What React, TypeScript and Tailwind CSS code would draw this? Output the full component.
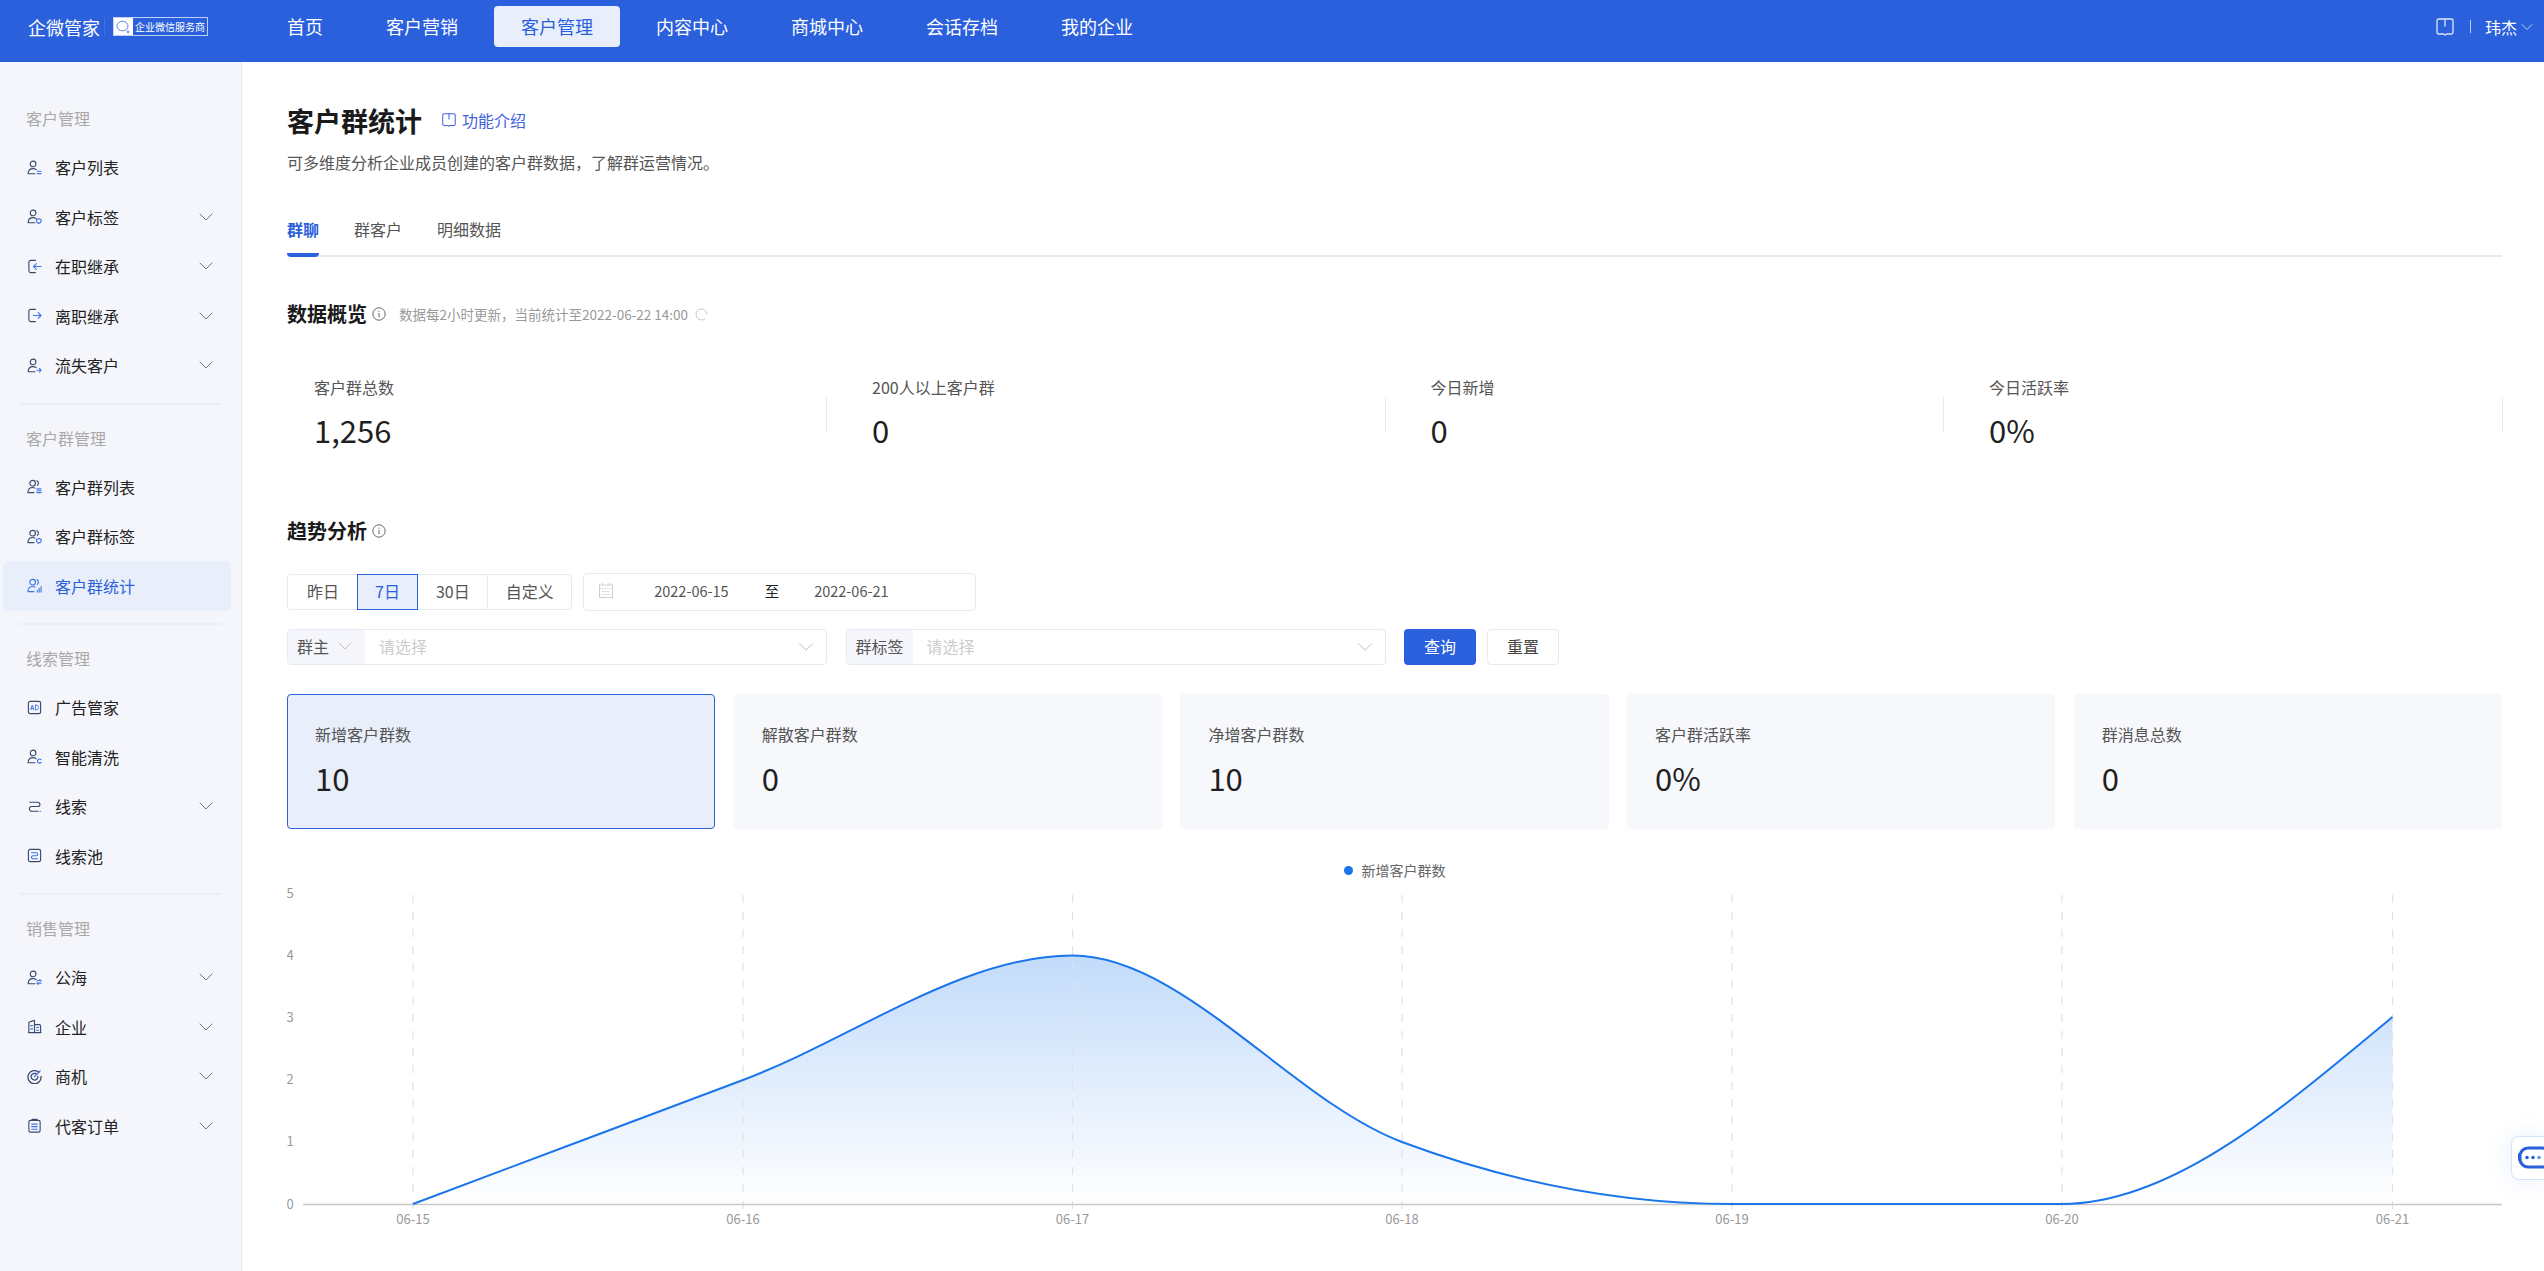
import { FC, ReactNode } from "react";
import { ChevronDown } from "lucide-react";

const DARK = "#3b4a6b";
const BLUE = "#3f74e8";

const Svg: FC<{ color?: string; children: ReactNode }> = ({ color = DARK, children }) => (
  <svg width="15" height="15" viewBox="0 0 16 16" fill="none" stroke={color} strokeWidth="1.2" strokeLinecap="round" strokeLinejoin="round" className="shrink-0">
    {children}
  </svg>
);

const Person = () => (
  <>
    <circle cx="6.5" cy="4.2" r="3" />
    <path d="M1.2 14.6c0-3.2 2.2-5.4 5.3-5.4 1.3 0 2.4.4 3.3 1.1M1.2 14.6h7.3" />
  </>
);

const Group = () => (
  <>
    <circle cx="6" cy="4.5" r="3" />
    <path d="M10.5 1.8a3 3 0 0 1 .6 5M1 14.5c0-3.3 2-5.5 5-5.5 1 0 1.8.2 2.5.7M1 14.5h6.5" />
  </>
);

const icons: Record<string, ReactNode> = {
  userList: <Svg><Person /><path stroke={BLUE} d="M11 12h4M11 14.5h4" /></Svg>,
  userTag: <Svg><Person /><path stroke={BLUE} d="M10 11.5l2.5-1 2.8 1-.6 2.6-2.2 1.4-2-1.6z" /></Svg>,
  loginIn: <Svg><path d="M9 1.5H4a2 2 0 0 0-2 2v9a2 2 0 0 0 2 2h5" /><path stroke={BLUE} d="M15 8H7M10 5 7 8l3 3" /></Svg>,
  loginOut: <Svg><path d="M9 1.5H4a2 2 0 0 0-2 2v9a2 2 0 0 0 2 2h5" /><path stroke={BLUE} d="M7 8h8M12 5l3 3-3 3" /></Svg>,
  userLost: <Svg><Person /><path stroke={BLUE} d="M10.5 13h4.5M13.3 11.2l1.7 1.8-1.7 1.8" /></Svg>,
  groupList: <Svg><Group /><path stroke={BLUE} d="M10.5 10.5h4.5M10.5 12.5h4.5M10.5 14.5h4.5" /></Svg>,
  groupTag: <Svg><Group /><path stroke={BLUE} d="M10 11.5l2.5-1.5 2.8 1-.6 2.8-2.5 1.5-2-1.8z" /></Svg>,
  groupStat: <Svg color={BLUE}><Group /><path d="M11 15v-2M13 15v-4M15 15V9" /></Svg>,
  ad: (
    <Svg>
      <rect x="1.5" y="1.5" width="13" height="13" rx="1.8" />
      <path stroke={BLUE} strokeWidth="1" d="M4 10.5 5.6 5.5 7.2 10.5M4.5 9h2.2M9 5.5v5h1.2c1.2 0 2-1 2-2.5s-.8-2.5-2-2.5z" />
    </Svg>
  ),
  userClean: <Svg><Person /><path stroke={BLUE} d="M15 11.4a2.2 2.2 0 1 0 0 3" /></Svg>,
  clue: <Svg><path d="M3 3.5h8.5a2.2 2.2 0 0 1 0 4.5H5a2.5 2.5 0 0 0 0 5h7" /><path stroke={BLUE} d="M14 13h.5" /></Svg>,
  cluePool: (
    <Svg>
      <rect x="1.5" y="1.5" width="13" height="13" rx="1.8" />
      <path stroke={BLUE} d="M4.8 5h5a1.6 1.6 0 0 1 0 3.2H6.3a1.6 1.6 0 0 0 0 3.2h5" />
    </Svg>
  ),
  sea: <Svg><Person /><path stroke={BLUE} d="M10.5 11.5h4.5M13.5 10.2l1.5 1.3M15 14h-4.5M12 15.3 10.5 14" /></Svg>,
  company: (
    <Svg>
      <path d="M2 14.5V3.5L8 1.5v13M8 6h5a1.5 1.5 0 0 1 1.5 1.5v7M1.5 14.5h13.5" />
      <path stroke={BLUE} d="M4 7h2M4 10.5h2M10 9h2.5M10 12h2.5" />
    </Svg>
  ),
  target: (
    <Svg>
      <path strokeWidth="1.4" d="M12.8 3.6A7 7 0 1 0 15 8" />
      <path strokeWidth="1.4" d="M10.5 5.6A3.6 3.6 0 1 0 11.6 8" />
      <path stroke={BLUE} strokeWidth="1.4" d="M8 8l6-6" />
    </Svg>
  ),
  order: (
    <Svg>
      <rect x="2" y="2.5" width="12" height="12.5" rx="1.8" />
      <path strokeWidth="1.6" d="M5.5 1.6h5" />
      <path stroke={BLUE} d="M5 6.5h6M5 9.2h6M5 12h6" />
    </Svg>
  ),
};

type MenuItem = { label: string; icon: string; arrow?: boolean; active?: boolean };

const menu: { title: string; items: MenuItem[] }[] = [
  {
    title: "客户管理",
    items: [
      { label: "客户列表", icon: "userList" },
      { label: "客户标签", icon: "userTag", arrow: true },
      { label: "在职继承", icon: "loginIn", arrow: true },
      { label: "离职继承", icon: "loginOut", arrow: true },
      { label: "流失客户", icon: "userLost", arrow: true },
    ],
  },
  {
    title: "客户群管理",
    items: [
      { label: "客户群列表", icon: "groupList" },
      { label: "客户群标签", icon: "groupTag" },
      { label: "客户群统计", icon: "groupStat", active: true },
    ],
  },
  {
    title: "线索管理",
    items: [
      { label: "广告管家", icon: "ad" },
      { label: "智能清洗", icon: "userClean" },
      { label: "线索", icon: "clue", arrow: true },
      { label: "线索池", icon: "cluePool" },
    ],
  },
  {
    title: "销售管理",
    items: [
      { label: "公海", icon: "sea", arrow: true },
      { label: "企业", icon: "company", arrow: true },
      { label: "商机", icon: "target", arrow: true },
      { label: "代客订单", icon: "order", arrow: true },
    ],
  },
];

const navItems = ["首页", "客户营销", "客户管理", "内容中心", "商城中心", "会话存档", "我的企业"];

const BookIcon: FC<{ color: string; size: number }> = ({ color, size }) => (
  <svg width={size} height={size} viewBox="0 0 18 18" fill="none" stroke={color} strokeWidth="1.3" strokeLinejoin="round" className="shrink-0">
    <path d="M1 2.5A1.5 1.5 0 0 1 2.5 1H15.5A1.5 1.5 0 0 1 17 2.5V14.5A1.5 1.5 0 0 1 15.5 16H10.5L9 17 7.5 16H2.5A1.5 1.5 0 0 1 1 14.5Z" />
    <path d="M9 1V8.5" />
  </svg>
);

const InfoIcon = () => (
  <svg width="14" height="14" viewBox="0 0 14 14" fill="none" stroke="#666" strokeWidth="1" className="shrink-0">
    <circle cx="7" cy="7" r="6.2" />
    <path d="M7 6v4.2M7 3.6v1.2" />
  </svg>
);

const Header = () => (
  <header className="h-[62px] shrink-0 bg-[#2b60dd] flex items-center pb-[9px] text-white">
    <div className="w-[260px] pl-[28px] flex items-center">
      <span className="text-[18px] leading-none w-[72px]">企微管家</span>
      <span className="ml-[4px] w-px h-[18px] bg-white/10" />
      <div className="ml-[8px] w-[95px] h-[19px] border border-white/70 flex items-center">
        <span className="w-[19px] h-full bg-white flex items-center justify-center shrink-0">
          <svg width="15" height="14" viewBox="0 0 15 14" fill="none" stroke="#5b83e5" strokeWidth="1">
            <ellipse cx="6.5" cy="6" rx="5.5" ry="4.8" />
            <circle cx="12" cy="11.8" r="1" />
          </svg>
        </span>
        <span className="text-[10px] leading-none pl-[2px] whitespace-nowrap">企业微信服务商</span>
      </div>
    </div>
    <nav className="flex items-center gap-[9px]">
      {navItems.map((item) => (
        <a
          key={item}
          className={
            item === "客户管理"
              ? "h-[41px] px-[27px] flex items-center text-[18px] rounded bg-[#e8eefa] text-[#2b60dd]"
              : "h-[41px] px-[27px] flex items-center text-[18px] text-white"
          }
        >
          {item}
        </a>
      ))}
    </nav>
    <div className="ml-auto pr-[7px] flex items-center">
      <BookIcon color="#dbe6fb" size={18} />
      <span className="ml-[16px] w-px h-[13px] bg-white/70" />
      <span className="ml-[14px] text-[16px] leading-none">玮杰</span>
      <ChevronDown size={20} strokeWidth={1.1} className="text-[#c3d3f6]" />
    </div>
  </header>
);

const Sidebar = () => (
  <aside className="w-[242px] shrink-0 bg-[#f5f6fb] border-r border-[#e8eaef] pt-[44px]">
    {menu.map((group, i) => (
      <div key={group.title}>
        {i > 0 && <div className="mx-[20px] mt-[12.5px] mb-[21px] h-[2px] bg-[#eceef3]" />}
        <div className="pl-[26px] h-6 leading-6 mb-[12.5px] text-[16px] text-[#a9a9a9]">{group.title}</div>
        {group.items.map((item) => (
          <div
            key={item.label}
            className={
              item.active
                ? "ml-[3px] mr-[10px] pl-[24px] pr-[13px] h-[49.5px] flex items-center rounded-md bg-[#e8eefa] text-[#2b60dd]"
                : "ml-[3px] mr-[10px] pl-[24px] pr-[13px] h-[49.5px] flex items-center text-[#222]"
            }
          >
            {icons[item.icon]}
            <span className="ml-[13px] text-[16px]">{item.label}</span>
            {item.arrow && <ChevronDown size={24} strokeWidth={0.8} className="ml-auto text-[#4a5570]" />}
          </div>
        ))}
      </div>
    ))}
  </aside>
);

const overview = [
  { label: "客户群总数", value: "1,256" },
  { label: "200人以上客户群", value: "0" },
  { label: "今日新增", value: "0" },
  { label: "今日活跃率", value: "0%" },
];

const Overview = () => (
  <div className="mt-[47px] grid grid-cols-[540px_repeat(3,558.5px)]">
    {overview.map((stat, i) => (
      <div key={stat.label} className={i === 0 ? "pl-[27px] flex items-center justify-between" : "pl-[45px] flex items-center justify-between"}>
        <div>
          <div className="h-6 leading-[23px] text-[16px] text-[#555]">{stat.label}</div>
          <div className="mt-[8px] h-[44px] leading-[44px] text-[31px] text-[#1f1f1f]">{stat.value}</div>
        </div>
        <span className="w-px h-[36px] mt-[2px] bg-[#e8eaef]" />
      </div>
    ))}
  </div>
);

const ranges = ["昨日", "7日", "30日", "自定义"];

const RangeTabs = () => (
  <div className="flex h-9 text-[16px] text-[#555]">
    {ranges.map((r, i) => (
      <div
        key={r}
        className={
          r === "7日"
            ? "px-[17.5px] pb-[2px] flex items-center border border-[#2b60dd] bg-[#e8eefa] text-[#2b60dd]"
            : i === 0
              ? "pl-[19px] pr-[17.5px] pb-[2px] flex items-center border border-[#e8eaef] border-r-0 rounded-l"
              : i === ranges.length - 1
                ? "px-[17.5px] pb-[2px] flex items-center border border-[#e8eaef] border-l-0 rounded-r"
                : "px-[17.5px] pb-[2px] flex items-center border border-[#e8eaef] border-l-0"
        }
      >
        {r}
      </div>
    ))}
  </div>
);

const DatePicker = () => (
  <div className="ml-[11px] w-[393px] h-[38px] pb-[2px] flex items-center border border-[#e8eaef] rounded text-[#555] text-[14.5px]">
    <svg width="14" height="15" viewBox="0 0 14 15" fill="none" stroke="#cfcfcf" className="ml-[15px] mb-[2px] shrink-0">
      <rect x="0.5" y="2" width="13" height="12.5" />
      <path d="M3.5 0v3M10.5 0v3M0.5 5.5h13M3 8.5h8M3 11.5h8" strokeDasharray="1.5 1" />
    </svg>
    <span className="ml-[41px]">2022-06-15</span>
    <span className="ml-[36px] text-[#222]">至</span>
    <span className="ml-[35px]">2022-06-21</span>
  </div>
);

const Select: FC<{ prefix: string; prefixArrow?: boolean; className: string; prefixWidth: string }> = ({ prefix, prefixArrow, className, prefixWidth }) => (
  <div className={`h-9 flex items-center border border-[#e8eaef] rounded overflow-hidden ${className}`}>
    <div className={`h-full bg-[#f5f6fb] flex items-center pl-[9px] pb-[2px] text-[16px] text-[#555] shrink-0 ${prefixWidth}`}>
      {prefix}
      {prefixArrow && <ChevronDown size={24} strokeWidth={0.7} className="ml-[4px] text-[#aaa]" />}
    </div>
    <span className="ml-[14px] pb-[2px] text-[16px] text-[#ccc]">请选择</span>
    <ChevronDown size={26} strokeWidth={0.7} className="ml-auto mr-[7px] text-[#aaa]" />
  </div>
);

const cards = [
  { label: "新增客户群数", value: "10", active: true },
  { label: "解散客户群数", value: "0" },
  { label: "净增客户群数", value: "10" },
  { label: "客户群活跃率", value: "0%" },
  { label: "群消息总数", value: "0" },
];

const ticks = [
  { x: 413, label: "06-15" },
  { x: 743, label: "06-16" },
  { x: 1072.5, label: "06-17" },
  { x: 1402, label: "06-18" },
  { x: 1732, label: "06-19" },
  { x: 2062, label: "06-20" },
  { x: 2392.5, label: "06-21" },
];

const CURVE =
  "M413 1204C523 1163 633 1121 743 1080C853 1038.5 962.5 955.5 1072.5 955.5C1182 955.5 1292 1100.5 1402 1142C1512 1183 1622 1204 1732 1204L2062 1204C2172 1204 2282 1109 2392.5 1017";

const Chart = () => (
  <svg width="2215" height="358" viewBox="287 882 2215 358" className="block">
    <defs>
      <linearGradient id="area" gradientUnits="userSpaceOnUse" x1="0" y1="955" x2="0" y2="1204">
        <stop offset="0" stopColor="#c2dbfa" />
        <stop offset="1" stopColor="#ffffff" />
      </linearGradient>
    </defs>
    {[5, 4, 3, 2, 1, 0].map((v) => (
      <text key={v} x="290" y={1204 - 62.2 * v + 4.5} textAnchor="middle" fontSize="13" fill="#999">
        {v}
      </text>
    ))}
    <path d={`${CURVE}L2392.5 1204Z`} fill="url(#area)" />
    {ticks.map((t) => (
      <g key={t.label}>
        <line x1={t.x} x2={t.x} y1="895" y2="1210" stroke="#dfe1e6" strokeDasharray="8 9" strokeWidth="1.2" />
        <text x={t.x} y="1224" textAnchor="middle" fontSize="13" fill="#999">
          {t.label}
        </text>
      </g>
    ))}
    <line x1="303" x2="2502" y1="1204.5" y2="1204.5" stroke="#c8c8c8" strokeWidth="1.3" />
    <path d={CURVE} fill="none" stroke="#1a75ea" strokeWidth="2" />
  </svg>
);

const App: FC = () => (
  <div className="relative h-[1271px] overflow-hidden flex flex-col bg-white font-['Noto_Sans_CJK_SC','Noto_Sans',sans-serif]">
    <Header />
    <div className="flex flex-1 min-h-0">
      <Sidebar />
      <main className="flex-1 min-w-0 pl-[45px] pr-[42px] pt-[40px]">
        <div className="h-9 flex items-center">
          <h1 className="text-[27px] leading-none font-bold text-[#1a1a1a]">客户群统计</h1>
          <span className="ml-[20px]">
            <BookIcon color="#3f63dd" size={14} />
          </span>
          <a className="ml-[6px] text-[16px] text-[#3f63dd]">功能介绍</a>
        </div>
        <p className="mt-[12px] h-6 leading-6 text-[16px] text-[#555]">可多维度分析企业成员创建的客户群数据，了解群运营情况。</p>

        <div className="mt-[45px] flex gap-[35px] border-b-2 border-[#e8eaef] text-[16px] text-[#555]">
          <div className="h-[38px] -mb-[2px] border-b-4 border-[#2b60dd] rounded-sm leading-[21px] font-bold text-[#2b60dd]">群聊</div>
          <div className="h-[36px] leading-[21px]">群客户</div>
          <div className="h-[36px] leading-[21px]">明细数据</div>
        </div>

        <div className="mt-[42px] h-[30px] flex items-center">
          <h2 className="text-[20px] font-bold text-[#1a1a1a]">数据概览</h2>
          <span className="ml-[5px]"><InfoIcon /></span>
          <span className="ml-[13px] text-[13.5px] text-[#999]">数据每2小时更新，当前统计至2022-06-22 14:00</span>
          <svg width="13" height="13" viewBox="0 0 13 13" fill="none" stroke="#c8c8c8" strokeWidth="1" className="ml-[7px]">
            <path d="M12 6a5.5 5.5 0 1 0-1.6 4.4" />
          </svg>
        </div>
        <Overview />

        <div className="mt-[64px] h-[30px] flex items-center">
          <h2 className="text-[20px] font-bold text-[#1a1a1a]">趋势分析</h2>
          <span className="ml-[5px]"><InfoIcon /></span>
        </div>

        <div className="mt-[27px] h-[38px] flex items-center">
          <RangeTabs />
          <DatePicker />
        </div>

        <div className="mt-[18px] h-9 flex items-center">
          <Select prefix="群主" prefixArrow className="w-[540px]" prefixWidth="w-[77px]" />
          <Select prefix="群标签" className="ml-[18.5px] w-[540px]" prefixWidth="w-[66px]" />
          <button className="ml-[18.5px] w-[72px] h-9 pb-[2px] rounded-sm bg-[#2b60dd] text-white text-[16px]">查询</button>
          <button className="ml-[11px] w-[72px] h-9 pb-[2px] rounded-sm border border-[#e8eaef] text-[#444] text-[16px]">重置</button>
        </div>

        <div className="mt-[29px] grid grid-cols-5 gap-[18.5px]">
          {cards.map((card) => (
            <div
              key={card.label}
              className={
                card.active
                  ? "h-[135px] pl-[27px] pt-[29px] rounded border border-[#2b60dd] bg-[#e8eefa]"
                  : "h-[135px] pl-[28px] pt-[30px] rounded bg-[#f7f8fc]"
              }
            >
              <div className="h-6 leading-[21px] text-[16px] text-[#555]">{card.label}</div>
              <div className="mt-[8px] h-[44px] leading-[44px] text-[31px] text-[#1f1f1f]">{card.value}</div>
            </div>
          ))}
        </div>

        <div className="mt-[29px] h-6 flex items-center justify-center text-[14px] text-[#666]">
          <span className="w-[9px] h-[9px] rounded-full bg-[#1a75ea] mr-[9px]" />
          新增客户群数
        </div>
        <Chart />
      </main>
    </div>
    <div className="absolute right-0 top-[1136px] w-[33px] h-[44px] rounded-l-lg bg-white border border-r-0 border-[#d6e4fb] shadow-[0_0_24px_rgba(63,116,232,0.12)] flex items-center pl-[6px] overflow-hidden">
      <svg width="34" height="24" viewBox="0 0 34 24" fill="none" className="shrink-0">
        <rect x="2" y="2" width="30" height="19" rx="8" stroke="#2b60dd" strokeWidth="3" />
        <rect x="0" y="7" width="2" height="8" rx="1" fill="#2b60dd" />
        <circle cx="9" cy="11.5" r="1.8" fill="#2b60dd" />
        <circle cx="15" cy="11.5" r="1.8" fill="#2b60dd" />
        <circle cx="21" cy="11.5" r="1.8" fill="#6a93ea" />
      </svg>
    </div>
  </div>
);

export default App;
